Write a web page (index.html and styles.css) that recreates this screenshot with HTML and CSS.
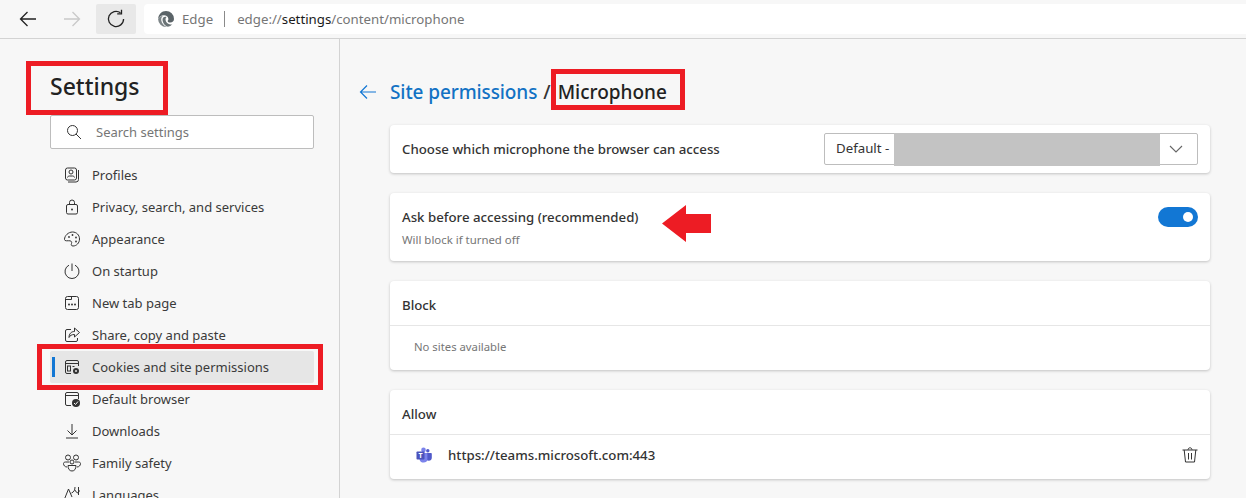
FILE: index.html
```html
<!DOCTYPE html>
<html lang="en">
<head>
<meta charset="utf-8">
<title>Settings</title>
<link rel="stylesheet" href="styles.css">
</head>
<body>
<div class="app">
  <header class="toolbar">
    <button class="tool"><svg width="20" height="20" viewBox="0 0 20 20"><path d="M18 10H2.500M9.500 3 2.500 10l7 7" class="ink"/></svg></button>
    <button class="tool"><svg width="20" height="20" viewBox="0 0 20 20"><path d="M2 10h15.500M10.500 3l7 7-7 7" class="ink faint"/></svg></button>
    <button class="tool active"><svg width="20" height="20" viewBox="0 0 20 20"><path d="M14.500 3.800A7.600 7.600 0 1 0 17.600 10" class="ink"/><path d="M15.500 .8v4h-4.300" class="ink"/></svg></button>
    <div class="address">
      <svg class="edge" width="16" height="16" viewBox="0 0 16 16"><path fill="#5b6468" d="M8 0a8 8 0 0 1 8 8c0 2-1.500 3.500-3.700 3.500-1.500 0-2.600-.7-2.600-1.600 0-.5.700-.6.700-1.900C10.400 5.800 8.300 4.300 6 4.300 3.300 4.300 1 6 .1 8 .4 3.500 3.700 0 8 0z"/><path fill="#7d8588" d="M.1 8.300C.6 6.200 2.700 5 4.800 5c-1.300 1.100-1.800 2.600-1.500 4.400.4 2.600 2.600 5.400 5.700 6.500-.3.100-.7.100-1 .100A8 8 0 0 1 .1 8.300z"/><path fill="#6a7376" d="M5 6.800C6 5.700 7.500 5.300 8.600 6c-1.400 1-1.400 3.200-.3 5 1.300 2 4 3 6 2.200A8 8 0 0 1 9.900 15.800C6.500 15 3.300 10 5 6.800z"/></svg>
      <span class="brand">Edge</span>
      <span class="sep"></span>
      <span class="url">edge://<b>settings</b>/content/microphone</span>
    </div>
  </header>
  <div class="body">
    <aside class="sidebar">
      <h1 class="side-title">Settings</h1>
      <div class="search">
        <svg width="16" height="16" viewBox="0 0 16 16"><circle cx="6.500" cy="6.500" r="5" class="ink thin"/><path d="M10 10l5 5" class="ink thin"/></svg>
        <span>Search settings</span>
      </div>
      <nav class="nav">
        <a class="nav-item"><svg viewBox="0 0 16 16" width="16" height="16"><rect x="1.500" y="1" width="11" height="12" rx="2" class="ink thin"/><circle cx="7" cy="5" r="2" class="ink thin"/><path d="M3.500 10.500c0-1 1-1.500 2-1.500h3c1 0 2 .5 2 1.500M14.500 3v9.500a2.500 2.500 0 0 1-2.500 2.500H4" class="ink thin"/></svg>Profiles</a>
        <a class="nav-item"><svg viewBox="0 0 16 16" width="16" height="16"><rect x="2.500" y="5.500" width="11" height="9.500" rx="1.500" class="ink thin"/><path d="M5.500 5.500V3.500a2.500 2.500 0 0 1 5 0v2" class="ink thin"/><circle cx="8" cy="10.500" r="1" fill="#333"/></svg>Privacy, search, and services</a>
        <a class="nav-item"><svg viewBox="0 0 16 16" width="16" height="16"><path d="M.5 8.500C.5 4.500 4.500 1 8.500 1s7 3 7 7-3 7-6.500 7c-2 0-2-1.500-1.500-2.500.5-1.200 0-2.500-1.500-2.700C4 9.500.5 10.500.5 8.500z" class="ink thin"/><circle cx="5" cy="6" r=".9" fill="#333"/><circle cx="8.500" cy="4" r=".9" fill="#333"/><circle cx="12" cy="6.500" r=".9" fill="#333"/><circle cx="12" cy="10.500" r=".9" fill="#333"/></svg>Appearance</a>
        <a class="nav-item"><svg viewBox="0 0 16 16" width="16" height="16"><path d="M5 2.200a7 7 0 1 0 6 0M8 0.500v7.500" class="ink thin"/></svg>On startup</a>
        <a class="nav-item"><svg viewBox="0 0 16 16" width="16" height="16"><rect x="1.500" y="1.500" width="13" height="13" rx="2" class="ink thin"/><path d="M1.500 4.500h6V1.500" class="ink thin"/><circle cx="5" cy="9.500" r="1" fill="#333"/><circle cx="8" cy="9.500" r="1" fill="#333"/><circle cx="11" cy="9.500" r="1" fill="#333"/></svg>New tab page</a>
        <a class="nav-item"><svg viewBox="0 0 16 16" width="16" height="16"><path d="M7 2.500H3a1.500 1.500 0 0 0-1.500 1.500v9A1.500 1.500 0 0 0 3 14.500h9a1.500 1.500 0 0 0 1.500-1.500v-2" class="ink thin"/><path d="M10.500 1l5 4.500-5 4.500V7.500c-3 0-4.500 1-5.500 3 0-3.500 2-6 5.500-6z" class="ink thin"/></svg>Share, copy and paste</a>
        <a class="nav-item current"><svg viewBox="0 0 16 16" width="16" height="16"><path d="M7 14.500H3A1.500 1.500 0 0 1 1.500 13V3A1.500 1.500 0 0 1 3 1.500h10A1.500 1.500 0 0 1 14.500 3v4M1.500 4.500h13" class="ink thin"/><rect x="3.500" y="7" width="3" height="5" class="ink thin"/><path d="M8.500 7.500h2" class="ink thin"/><circle cx="12" cy="12" r="3" fill="#333"/><circle cx="12" cy="12" r="1" fill="#e6e6e6"/></svg>Cookies and site permissions</a>
        <a class="nav-item"><svg viewBox="0 0 16 16" width="16" height="16"><path d="M7 14.500H3A1.500 1.500 0 0 1 1.500 13V3A1.500 1.500 0 0 1 3 1.500h10A1.500 1.500 0 0 1 14.500 3v5M1.500 4.500h13" class="ink thin"/><circle cx="12" cy="12" r="4" fill="#333"/><path d="M10 12l1.500 1.500 2.500-3" fill="none" stroke="#f7f7f7" stroke-width="1"/></svg>Default browser</a>
        <a class="nav-item"><svg viewBox="0 0 16 16" width="16" height="16"><path d="M8 1v11M3.500 7.500 8 12l4.500-4.500M2 15h12" class="ink thin"/></svg>Downloads</a>
        <a class="nav-item"><svg class="wide" viewBox="0 0 18 18" width="18" height="18"><circle cx="5" cy="3.500" r="2.500" class="ink thin"/><circle cx="13" cy="3.500" r="2.500" class="ink thin"/><circle cx="9" cy="8" r="2" class="ink thin"/><path d="M6 8H2.500C1.500 8 .5 8.500.5 9.500c0 2 1.500 3.500 3.500 3.500M12 8h3.500c1 0 2 .5 2 1.500 0 2-1.500 3.500-3.500 3.500M5 11.500h8c0 3.500-1.500 5.500-4 5.500s-4-2-4-5.500z" class="ink thin"/></svg>Family safety</a>
        <a class="nav-item"><svg viewBox="0 0 16 16" width="16" height="16"><path d="M4.500 2 .5 12M4.500 2l3.500 8M11 0c0 3-1 5-3.500 6M11 3c.5 1.500 1.500 2.500 3 3M14.500 0v8M14.500 4h1.500" class="ink thin"/></svg>Languages</a>
      </nav>
    </aside>
    <main class="content">
      <div class="crumbs">
        <svg class="back" width="18" height="18" viewBox="0 0 18 18"><path d="M17 9H1.500M8 2.500 1.500 9 8 15.500" fill="none" stroke="#1277d4" stroke-width="1.200"/></svg>
        <a class="crumb-link">Site permissions</a>
        <span class="crumb-sep">/</span>
        <span class="crumb-here">Microphone</span>
      </div>
      <section class="card row-card">
        <span class="label">Choose which microphone the browser can access</span>
        <div class="select">
          <span class="select-text">Default -</span>
          <span class="redacted"></span>
          <span class="chev"><svg width="14" height="8" viewBox="0 0 14 8"><path d="M1 1l6 6 6-6" fill="none" stroke="#666" stroke-width="1.100"/></svg></span>
        </div>
      </section>
      <section class="card toggle-card">
        <div>
          <div class="label">Ask before accessing (recommended)</div>
          <div class="hint">Will block if turned off</div>
        </div>
        <span class="toggle"><span class="knob"></span></span>
      </section>
      <section class="card">
        <div class="card-head label">Block</div>
        <div class="card-row empty">No sites available</div>
      </section>
      <section class="card">
        <div class="card-head label">Allow</div>
        <div class="card-row site">
          <svg class="teams" width="16" height="16" viewBox="0 0 16 16"><circle cx="11.800" cy="3.800" r="1.700" fill="#5059c9"/><path d="M10 6h5c.5 0 .8.300.8.800v4c0 1.700-1.300 3-3 3s-2.800-1-2.800-2z" fill="#5059c9"/><circle cx="7.500" cy="2.900" r="2.300" fill="#7b83eb"/><path d="M3.500 6h7.300c.3 0 .6.300.6.600v6c0 1.800-1.700 3-3.700 3-2.200 0-4.200-1.500-4.200-3.700z" fill="#7b83eb"/><rect x="0.500" y="4.500" width="8" height="8" rx=".8" fill="#4b53bc"/><text x="4.500" y="11" class="teams-t">T</text></svg>
          <span class="site-url">https://teams.microsoft.com:443</span>
          <svg class="trash" width="16" height="16" viewBox="0 0 16 16"><path d="M.5 3h15M2.200 3l1.300 12h9L13.800 3M6 2.800C6 1.500 7 .8 8 .8s2 .7 2 2M6.500 6v6.500M9.500 6v6.500" class="ink thin"/></svg>
        </div>
      </section>
    </main>
  </div>
  <span class="mark mark-title"></span>
  <span class="mark mark-here"></span>
  <span class="mark mark-nav"></span>
  <svg class="arrow" width="49" height="37" viewBox="0 0 49 37"><path d="M0 18.500 24 0v9h25v19H24v9z" fill="#ed1c24"/></svg>
</div>
</body>
</html>
```
FILE: styles.css
```css
* { box-sizing: border-box; }
html, body { margin: 0; padding: 0; }
body {
  width: 1246px;
  height: 498px;
  overflow: hidden;
  background: #f7f7f7;
  font-family: "Noto Sans", "Open Sans", sans-serif;
  font-size: 13px;
  color: #333;
}
.app { position: relative; width: 1246px; height: 498px; overflow: hidden; }
.ink { fill: none; stroke: #222; stroke-width: 1.300; }
.ink.thin { stroke: #333; stroke-width: 1; }
.ink.faint { stroke: #c9c9c9; }

.toolbar {
  display: flex;
  align-items: center;
  height: 39px;
  padding: 0 0 1px 8px;
  gap: 4px;
  background: #f7f7f7;
  border-bottom: 1px solid #d3d3d3;
}
.tool {
  display: flex;
  align-items: center;
  justify-content: center;
  width: 40px;
  height: 30px;
  padding: 0;
  border: 0;
  background: none;
  border-radius: 2px;
}
.tool.active { background: #e8e8e8; }
.address {
  display: flex;
  align-items: center;
  flex: 1;
  height: 30px;
  margin-left: 4px;
  padding-left: 14px;
  background: #fff;
  border-radius: 4px 0 0 4px;
  font-size: 13.250px;
  color: #767676;
}
.brand { margin-left: 8px; }
.sep { width: 1px; height: 16px; margin: 0 12px 0 11px; background: #8a8a8a; }
.url b { font-weight: 400; color: #1a1a1a; }

.body { display: flex; height: 459px; }
.sidebar {
  flex: none;
  width: 340px;
  padding: 0 25px 0 50px;
  border-right: 1px solid #d3d3d3;
}
.side-title {
  height: 76px;
  margin: 0;
  padding-top: 28px;
  font-size: 23px;
  line-height: 38px;
  font-weight: 500;
  color: #222;
}
.search {
  display: flex;
  align-items: center;
  gap: 14px;
  height: 34px;
  padding-left: 15px;
  background: #fff;
  border: 1px solid #bdbdbd;
  border-radius: 2px;
  color: #767676;
}
.nav { margin-top: 10px; }
.nav-item {
  position: relative;
  display: flex;
  align-items: center;
  height: 32px;
  padding-left: 14px;
  gap: 12px;
  color: #3a3a3a;
  white-space: nowrap;
}
.nav-item svg { flex: none; }
.nav-item svg.wide { margin: 0 -1px; }
.nav-item.current { background: #e6e6e6; border-radius: 2px; }
.nav-item.current::before {
  content: "";
  position: absolute;
  left: 2px;
  top: 6px;
  width: 3px;
  height: 20px;
  background: #1277d4;
}

.content { flex: 1; padding: 0 36px 0 50px; }
.crumbs {
  display: flex;
  align-items: center;
  height: 86px;
  padding-top: 20px;
  font-size: 19px;
  font-weight: 500;
  white-space: nowrap;
}
.back { margin-left: -31px; margin-right: 13px; flex: none; }
.crumb-link { color: #1272c4; letter-spacing: -.1px; }
.crumb-sep { margin: 0 7px 0 6px; color: #333; }
.crumb-here { color: #222; }

.card {
  display: block;
  margin-bottom: 20px;
  background: #fff;
  border-radius: 4px;
  box-shadow: 0 1px 3px rgba(0, 0, 0, .22);
}
.label { font-size: 13.250px; font-weight: 500; color: #333; }
.row-card {
  display: flex;
  align-items: center;
  justify-content: space-between;
  height: 48px;
  padding: 0 12px;
}
.select {
  display: flex;
  align-items: stretch;
  width: 374px;
  height: 32px;
  border: 1px solid #bdbdbd;
  border-radius: 2px;
}
.select-text { width: 69px; padding-left: 11px; font-size: 13.250px; line-height: 29px; white-space: nowrap; }
.redacted { flex: 1; margin: -1px 0 -2px; background: #c3c3c3; }
.chev { display: flex; align-items: center; justify-content: center; width: 37px; padding-right: 5px; }
.toggle-card {
  display: flex;
  justify-content: space-between;
  height: 68px;
  padding: 14px 12px 0;
}
.toggle-card .label { margin-top: 1px; }
.hint { margin-top: 6px; font-size: 11.400px; color: #767676; }
.toggle {
  display: flex;
  align-items: center;
  justify-content: flex-end;
  width: 40px;
  height: 20px;
  padding-right: 5px;
  background: #1277d4;
  border-radius: 10px;
}
.knob { width: 10px; height: 10px; background: #fff; border-radius: 50%; }
.card-head {
  display: flex;
  align-items: center;
  height: 45px;
  padding: 3px 12px 0;
  border-bottom: 1px solid #e6e6e6;
}
.card-row { display: flex; align-items: center; height: 44px; padding-bottom: 4px; }
.empty { padding-left: 24px; font-size: 11.300px; color: #767676; }
.site { padding: 0 12px 4px 26px; }
.teams { flex: none; }
.teams-t { fill: #fff; font-size: 7px; font-weight: 700; text-anchor: middle; }
.site-url { flex: 1; margin-left: 16px; font-size: 13.250px; font-weight: 500; color: #333; }
.trash { flex: none; }

.mark { position: absolute; border: 5px solid #ed1c24; pointer-events: none; }
.mark-title { left: 26px; top: 61px; width: 142px; height: 54px; }
.mark-here { left: 551px; top: 69px; width: 134px; height: 41px; }
.mark-nav { left: 37px; top: 344px; width: 286px; height: 46px; }
.arrow { position: absolute; left: 662px; top: 205px; }
```
